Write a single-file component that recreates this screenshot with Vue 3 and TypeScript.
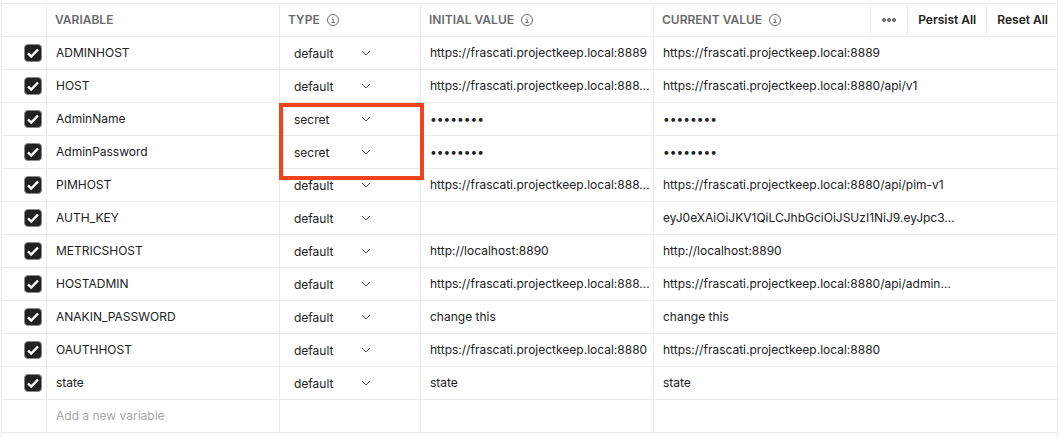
<script setup lang="ts">
import { ref } from 'vue'

interface Variable {
  name: string
  type: 'default' | 'secret'
  initial: string
  current: string
  enabled: boolean
  highlighted?: boolean
}

const mask = '••••••••'
const host = 'https://frascati.projectkeep.local'

const variables = ref<Variable[]>([
  { name: 'ADMINHOST', type: 'default', initial: `${host}:8889`, current: `${host}:8889`, enabled: true },
  { name: 'HOST', type: 'default', initial: `${host}:888…`, current: `${host}:8880/api/v1`, enabled: true },
  { name: 'AdminName', type: 'secret', initial: mask, current: mask, enabled: true, highlighted: true },
  { name: 'AdminPassword', type: 'secret', initial: mask, current: mask, enabled: true },
  { name: 'PIMHOST', type: 'default', initial: `${host}:888…`, current: `${host}:8880/api/pim-v1`, enabled: true },
  { name: 'AUTH_KEY', type: 'default', initial: '', current: 'eyJ0eXAiOiJKV1QiLCJhbGciOiJSUzI1NiJ9.eyJpc3…', enabled: true },
  { name: 'METRICSHOST', type: 'default', initial: 'http://localhost:8890', current: 'http://localhost:8890', enabled: true },
  { name: 'HOSTADMIN', type: 'default', initial: `${host}:888…`, current: `${host}:8880/api/admin…`, enabled: true },
  { name: 'ANAKIN_PASSWORD', type: 'default', initial: 'change this', current: 'change this', enabled: true },
  { name: 'OAUTHHOST', type: 'default', initial: `${host}:8880`, current: `${host}:8880`, enabled: true },
  { name: 'state', type: 'default', initial: 'state', current: 'state', enabled: true },
])

const newVariable = ref('')
</script>

<template>
  <main class="panel">
    <table class="variables">
      <colgroup>
        <col class="col-check" />
        <col class="col-name" />
        <col class="col-type" />
        <col class="col-initial" />
        <col />
      </colgroup>
      <thead>
        <tr>
          <th></th>
          <th scope="col">VARIABLE</th>
          <th scope="col">
            <div class="heading">
              TYPE
              <svg class="info" viewBox="0 0 12 12" aria-hidden="true">
                <circle cx="6" cy="6" r="5.5" />
                <path d="M4.7 5.3h1.5v3M4.5 8.5h3.2" />
                <path d="M5.4 3.3h1" />
              </svg>
            </div>
          </th>
          <th scope="col">
            <div class="heading">
              INITIAL VALUE
              <svg class="info" viewBox="0 0 12 12" aria-hidden="true">
                <circle cx="6" cy="6" r="5.5" />
                <path d="M4.7 5.3h1.5v3M4.5 8.5h3.2" />
                <path d="M5.4 3.3h1" />
              </svg>
            </div>
          </th>
          <th scope="col" class="last">
            <div class="toolbar">
              <div class="heading">
                CURRENT VALUE
                <svg class="info" viewBox="0 0 12 12" aria-hidden="true">
                  <circle cx="6" cy="6" r="5.5" />
                  <path d="M4.7 5.3h1.5v3M4.5 8.5h3.2" />
                  <path d="M5.4 3.3h1" />
                </svg>
              </div>
              <div class="actions">
                <button type="button" class="more" aria-label="More actions">
                  <svg viewBox="0 0 16 6" aria-hidden="true">
                    <circle cx="3" cy="3" r="1.5" />
                    <circle cx="8" cy="3" r="1.5" />
                    <circle cx="13" cy="3" r="1.5" />
                  </svg>
                </button>
                <button type="button">Persist All</button>
                <button type="button">Reset All</button>
              </div>
            </div>
          </th>
        </tr>
      </thead>
      <tbody>
        <tr v-for="variable in variables" :key="variable.name">
          <td class="check-cell">
            <label class="check">
              <input v-model="variable.enabled" type="checkbox" :aria-label="`Enable ${variable.name}`" />
              <svg v-if="variable.enabled" viewBox="0 0 18 18" aria-hidden="true">
                <path d="M4 9.4l3.2 3.1 6.8-7" />
              </svg>
            </label>
          </td>
          <td>{{ variable.name }}</td>
          <td class="type-cell">
            <div class="type">
              <select v-model="variable.type" :aria-label="`Type of ${variable.name}`">
                <option value="default">default</option>
                <option value="secret">secret</option>
              </select>
              <svg viewBox="0 0 10 8" aria-hidden="true">
                <path d="M1 1l4 4 4-4" />
              </svg>
            </div>
            <div v-if="variable.highlighted" class="highlight"></div>
          </td>
          <td>{{ variable.initial }}</td>
          <td class="last">{{ variable.current }}</td>
        </tr>
        <tr>
          <td></td>
          <td>
            <input
              v-model="newVariable"
              class="new-variable"
              type="text"
              placeholder="Add a new variable"
              aria-label="Add a new variable"
            />
          </td>
          <td></td>
          <td></td>
          <td class="last"></td>
        </tr>
      </tbody>
    </table>
  </main>
</template>

<style>
body {
  margin: 0;
  background: #fff;
}
</style>

<style scoped>
.panel {
  box-sizing: border-box;
  min-height: 100vh;
  margin: 0 6px 0 1px;
  padding-top: 3px;
  border-left: 1px solid #ebebeb;
  border-right: 1px solid #ebebeb;
  color: #212121;
  font-family: Inter, "Liberation Sans", sans-serif;
  font-size: 12px;
  line-height: 16px;
}

.variables {
  width: 100%;
  table-layout: fixed;
  border-collapse: separate;
  border-spacing: 0;
  border-top: 1px solid #ebebeb;
}

.col-check {
  width: 45px;
}

.col-name,
.col-initial {
  width: 233px;
}

.col-type {
  width: 141px;
}

th,
td {
  box-sizing: border-box;
  height: 33px;
  padding: 0 0 0 9px;
  border-right: 1px solid #ebebeb;
  border-bottom: 1px solid #ebebeb;
  text-align: left;
  white-space: nowrap;
  vertical-align: middle;
}

th {
  padding-left: 8px;
  color: #6b6b6b;
  font-weight: 600;
}

.last {
  border-right: 0;
}

.heading {
  display: flex;
  align-items: center;
  gap: 7px;
}

.info {
  width: 12px;
  height: 12px;
  fill: none;
  stroke: #6b6b6b;
  stroke-width: 1;
}

.toolbar {
  display: flex;
  justify-content: space-between;
  align-items: center;
}

.actions {
  display: flex;
}

.actions button {
  height: 32px;
  padding: 0 10px;
  border: 0;
  border-left: 1px solid #ebebeb;
  background: none;
  color: #212121;
  font: inherit;
  cursor: pointer;
}

.actions button:last-child {
  padding-right: 9px;
}

.actions .more {
  display: flex;
  align-items: center;
}

.more svg {
  width: 16px;
  height: 6px;
  fill: #a0a0a0;
  stroke: #4a4a4a;
  stroke-width: 1;
}

.check-cell {
  padding: 0 4px 0 0;
}

.check {
  display: grid;
  justify-content: end;
}

.check input,
.check svg {
  grid-area: 1 / 1;
  width: 18px;
  height: 18px;
}

.check input {
  margin: 0;
  appearance: none;
  border: 1px solid #8a8a8a;
  border-radius: 4px;
  background: #fff;
}

.check input:checked {
  background: #212121;
}

.check svg {
  fill: none;
  stroke: #fff;
  stroke-width: 2.4;
  pointer-events: none;
}

.type-cell {
  position: relative;
  padding-left: 14px;
}

.type {
  display: grid;
  width: 77px;
  padding-top: 1px;
  align-items: center;
}

.type select {
  grid-area: 1 / 1;
  height: 16px;
  margin: 0;
  padding: 0;
  border: 0;
  appearance: none;
  background: none;
  color: inherit;
  font: inherit;
}

.type svg {
  grid-area: 1 / 1;
  justify-self: end;
  width: 10px;
  height: 8px;
  fill: none;
  stroke: #505050;
  stroke-width: 1;
  pointer-events: none;
}

.highlight {
  position: absolute;
  z-index: 1;
  top: 0;
  left: -1px;
  box-sizing: border-box;
  width: calc(100% + 5px);
  height: calc(200% + 13px);
  border: 4px solid #f0441c;
  pointer-events: none;
}

.new-variable {
  display: block;
  box-sizing: border-box;
  width: 100%;
  height: 16px;
  padding: 0;
  border: 0;
  outline: 0;
  background: none;
  color: inherit;
  font: inherit;
}

.new-variable::placeholder {
  color: #a6a6a6;
  opacity: 1;
}
</style>
